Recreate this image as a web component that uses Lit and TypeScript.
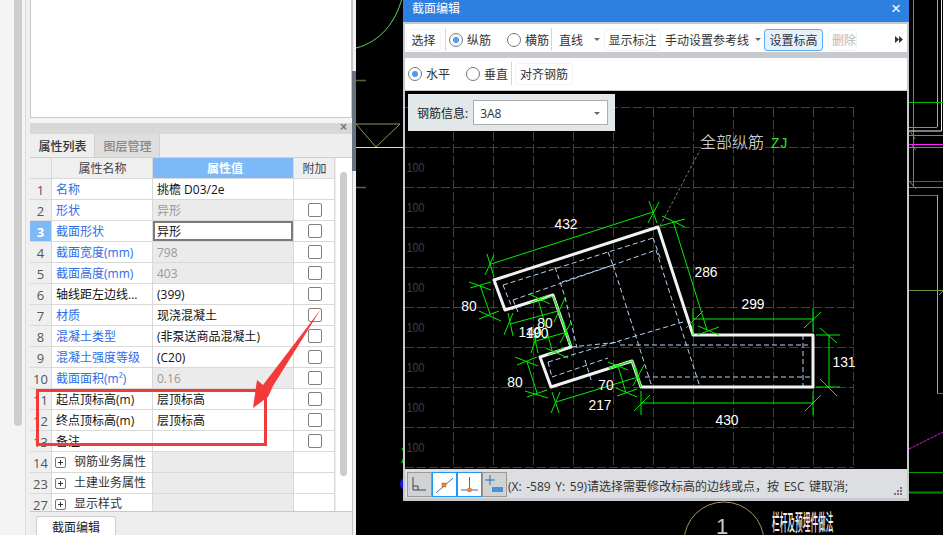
import { LitElement, html, svg, css } from "lit";
import { customElement } from "lit/decorators.js";

type Row = { n: string; name: string; link?: boolean; value?: string; ro?: boolean; check?: boolean; sel?: boolean; group?: boolean };

const rows: Row[] = [
  { n: "1", name: "名称", link: true, value: "挑檐 D03/2e" },
  { n: "2", name: "形状", link: true, value: "异形", ro: true, check: true },
  { n: "3", name: "截面形状", link: true, value: "异形", check: true, sel: true },
  { n: "4", name: "截面宽度(mm)", link: true, value: "798", ro: true, check: true },
  { n: "5", name: "截面高度(mm)", link: true, value: "403", ro: true, check: true },
  { n: "6", name: "轴线距左边线...", value: "(399)", check: true },
  { n: "7", name: "材质", link: true, value: "现浇混凝土", check: true },
  { n: "8", name: "混凝土类型", link: true, value: "(非泵送商品混凝土)", check: true },
  { n: "9", name: "混凝土强度等级", link: true, value: "(C20)", check: true },
  { n: "10", name: "截面面积(m²)", link: true, value: "0.16", ro: true, check: true },
  { n: "11", name: "起点顶标高(m)", value: "层顶标高", check: true },
  { n: "12", name: "终点顶标高(m)", value: "层顶标高", check: true },
  { n: "13", name: "备注", value: "", check: true },
  { n: "14", name: "钢筋业务属性", group: true, ro: true, value: "" },
  { n: "23", name: "土建业务属性", group: true, ro: true, value: "" },
  { n: "27", name: "显示样式", group: true, ro: true, value: "" },
];

const hx = [454, 494, 534, 574, 614, 654, 694, 734, 774, 814, 854];
const gridV = hx.map((x) => `M${x - 0.5} 108V468`).join("");
const gridH = [108, 148, 188, 228, 268, 308, 348, 388, 428, 468].map((y) => `M405 ${y - 0.5}H854`).join("");
const hundreds = [167, 207, 247, 287, 327, 367, 407, 447];

const green: number[][] = [
  [491, 264, 653, 212], [487, 254, 494, 277], [494, 255, 485, 275], [649, 201, 657, 223], [659, 202, 648, 223],
  [673, 221, 707, 330], [662, 216, 685, 227], [685, 219, 660, 226], [698, 326, 719, 335], [719, 327, 697, 335],
  [480, 285, 490, 314], [469, 282, 491, 290], [491, 282, 470, 288], [479, 311, 501, 321], [499, 311, 479, 319],
  [510, 324, 558, 311], [508, 313, 513, 336], [513, 313, 504, 335], [555, 300, 562, 322], [565, 298, 554, 322],
  [536, 341, 567, 332], [533, 330, 538, 353], [539, 329, 531, 353], [564, 322, 569, 343], [571, 322, 560, 343],
  [538, 299, 552, 350], [529, 294, 550, 304], [548, 295, 530, 303], [546, 348, 568, 358], [564, 348, 548, 355],
  [527, 362, 537, 393], [515, 357, 538, 366], [537, 357, 517, 365], [525, 391, 548, 398], [547, 390, 527, 397],
  [556, 402, 638, 377], [552, 392, 559, 413], [560, 392, 551, 413], [635, 365, 641, 387], [644, 365, 633, 386],
  [618, 366, 626, 393], [608, 362, 628, 370], [629, 362, 609, 369], [616, 388, 637, 397], [637, 389, 617, 396],
  [641, 403, 813, 403], [641, 391, 641, 415], [650, 395, 634, 411], [813, 391, 813, 415], [821, 395, 805, 411],
  [693, 319, 813, 319], [693, 308, 693, 335], [703, 311, 686, 328], [813, 308, 813, 332], [821, 312, 804, 328],
  [829, 335, 829, 387], [816, 335, 840, 335], [820, 328, 837, 343], [816, 387, 840, 387], [820, 379, 837, 396],
];
const greenPath = green.map((l) => `M${l[0]} ${l[1]}L${l[2]} ${l[3]}`).join("");

const rebar: number[][] = [
  [503, 285, 653, 238], [513, 300, 656, 250], [503, 285, 513, 310], [513, 300, 518, 312], [653, 238, 661, 260],
  [555, 267, 565, 297], [608, 252, 613, 265], [562, 282, 613, 265], [613, 265, 652, 387], [656, 250, 700, 387],
  [548, 362, 683, 322], [552, 377, 608, 358], [571, 347, 620, 342], [620, 345, 808, 345], [645, 377, 812, 377],
  [803, 335, 803, 387], [548, 362, 552, 377], [585, 360, 592, 383], [565, 297, 577, 348],
];
const rebarPath = rebar.map((l) => `M${l[0]} ${l[1]}L${l[2]} ${l[3]}`).join("");

const dims: [string, number, number][] = [
  ["432", 566, 229], ["286", 706, 277], ["299", 753, 309], ["131", 844, 367], ["430", 727, 425],
  ["217", 600, 410], ["70", 606, 390], ["80", 469, 311], ["80", 515, 387], ["80", 545, 328],
  ["140", 530, 337], ["190", 537, 338],
];

@customElement("app-root")
export class AppRoot extends LitElement {
  static styles = css`
    :host { display: block; width: 943px; height: 535px; position: relative; overflow: hidden; background: #000;
      font-family: "Open Sans", "Noto Sans CJK SC", sans-serif; font-size: 12px; color: #222; }
    .desk { position: absolute; left: 0; top: 0; width: 943px; height: 535px; }
    .marks { position: absolute; left: 0; top: 0; width: 943px; height: 535px; pointer-events: none; }
    .side { width: 356px; height: 535px; display: flex; background: #f4f4f4; padding-left: 14px; box-sizing: border-box; position: relative; }
    .rail { width: 8px; height: 426px; background: #cdcdcd; border-radius: 0 0 4px 4px; flex: none; }
    .gutter { width: 5px; margin-left: 3px; border-left: 1px solid #dcdcdc; background: #f0f0f0; box-sizing: border-box; flex: none; }
    .main { width: 322px; flex: none; display: flex; flex-direction: column; height: 535px; }
    .edge { flex: 1; background: #f2f2f2; border-left: 1px solid #c4c4c4; }
    .grip { position: absolute; right: 0; top: 71px; width: 4px; height: 100px; background: #6a7380; }
    .topbox { height: 118px; background: #fff; border: 1px solid #c8c8c8; border-top: 0; box-sizing: border-box; flex: none; }
    .phead { margin-top: 5px; height: 11px; background: #d8d8d8; position: relative; flex: none; }
    .phead span { position: absolute; right: 5px; top: -3px; font: 700 12px/15px "Liberation Sans", sans-serif; color: #777; }
    .tabs { height: 24px; display: flex; background: #eeeeee; border-bottom: 1px solid #d0d0d0; box-sizing: border-box; flex: none; }
    .tab { width: 65px; padding-left: 1px; text-align: center; line-height: 25px; font-weight: 500; color: #333; border-right: 1px solid #d0d0d0; box-sizing: border-box; }
    .tab.off { background: #dedede; color: #888; }
    .pbody { display: flex; flex: none; height: 354px; overflow: hidden; background: #fff; border-bottom: 1px solid #c8c8c8; box-sizing: border-box; }
    .table { width: 305px; flex: none; }
    .tr { display: grid; grid-template-columns: 22px 101px 141px 41px; height: 21px; }
    .tr > div { border-right: 1px solid #d9d9d9; border-bottom: 1px solid #d9d9d9; box-sizing: border-box; line-height: 22px; white-space: nowrap; overflow: hidden; }
    .idx { background: #efefef; text-align: center; font-size: 13px; color: #555; }
    .idx.sel { background: #7db8f8; color: #fff; font-weight: 700; }
    .hd { background: #efefef; text-align: center; color: #444; padding-left: 1px; }
    .hd.val { background: #7db8f8; color: #fff; font-weight: 700; }
    .nm { padding-left: 4px; color: #111; }
    .nm.link { color: #2f6ce5; }
    .nm.grp { padding-left: 3px; display: flex; align-items: center; gap: 8px; color: #333; }
    .plus { width: 11px; height: 11px; border: 1px solid #777; border-radius: 2px; box-sizing: border-box; position: relative; flex: none; }
    .plus::before { content: ""; position: absolute; left: 2px; right: 2px; top: 4px; height: 1px; background: #333; }
    .plus::after { content: ""; position: absolute; top: 2px; bottom: 2px; left: 4px; width: 1px; background: #333; }
    .val { padding-left: 4px; color: #111; }
    .val.ro { background: #ebebeb; color: #999; }
    .val.sel { box-shadow: inset 0 0 0 2px #7b7b7b; }
    .chk { display: flex; align-items: center; justify-content: center; padding-left: 1px; }
    .box { width: 14px; height: 14px; border: 1px solid #808080; border-radius: 2px; box-sizing: border-box; background: #fff; }
    .sb { flex: 1; background: #fff; border-left: 1px solid #eee; }
    .thumb { width: 7px; height: 304px; margin: 14px 0 0 4px; background: #cccccc; border-radius: 4px; }
    .btabs { flex: 1; background: #eeeeee; padding: 4px 0 0 6px; }
    .btab { width: 80px; height: 22px; background: #fff; border: 1px solid #cfcfcf; border-bottom: 0; border-radius: 3px 3px 0 0; box-sizing: border-box; text-align: center; line-height: 20px; padding-top: 1px; }
    .dlg { position: absolute; left: 403px; top: 0; width: 506px; height: 501px; background: #c6c9cd; display: flex; flex-direction: column; align-items: stretch; }
    .title { height: 22px; background: #2e80e0; color: #fff; padding-left: 9px; line-height: 17px; display: flex; justify-content: space-between; flex: none; }
    .title b { font: 400 17px/17px "Liberation Sans", sans-serif; margin-right: 8px; }
    .tb { background: #fff; margin: 0 2px; display: flex; align-items: center; flex: none; box-sizing: border-box; }
    .tb1 { height: 28px; margin-top: 2px; padding-top: 3px; }
    .tb2 { height: 32px; margin-top: 6px; margin-bottom: 1px; padding-bottom: 1px; }
    .btn { height: 22px; line-height: 21px; border: 1px solid #f3f3f3; border-radius: 3px; box-sizing: border-box; text-align: center; flex: none; white-space: nowrap; color: #333; }
    .btn.on { border-color: #62a9ef; background: #e5f1fd; color: #333; }
    .btn.dis { color: #b8b8b8; }
    .plain { flex: none; white-space: nowrap; color: #333; }
    .sep { width: 1px; height: 23px; background: #d5d5d5; flex: none; }
    .radio { width: 14px; height: 14px; border: 1px solid #777; border-radius: 50%; box-sizing: border-box; flex: none; position: relative; background: #fff; }
    .radio.on::after { content: ""; position: absolute; left: 3px; top: 3px; width: 6px; height: 6px; border-radius: 50%; background: #4a9cf2; }
    .caret { width: 0; height: 0; border: 3px solid transparent; border-top: 3px solid #666; border-bottom: 0; flex: none; }
    .more { flex: none; }
    .more svg { display: block; }
    .canvas { height: 378px; background: #000; margin: 0 2px; position: relative; flex: none; }
    .canvas svg { display: block; }
    .info { position: absolute; left: 3px; top: 3px; width: 207px; height: 37px; background: #e2e8ea; display: flex; align-items: center; box-sizing: border-box; padding-left: 9px; gap: 5px; }
    .sel-box { width: 135px; height: 25px; background: #fff; border: 1px solid #adadad; box-sizing: border-box; display: flex; align-items: center; justify-content: space-between; padding: 2px 7px 0 6px; color: #333; }
    .status { height: 29px; display: flex; align-items: center; background: #dcdee1; margin: 0 2px; padding: 2px 0 0 2px; box-sizing: border-box; position: relative; flex: none; color: #333; }
    .ib { width: 25px; height: 25px; box-sizing: border-box; border: 1px solid #9a9a9a; background: #d0d2d4; flex: none; }
    .ib.on { border: 1px solid #2196f3; background: #fff; }
    .ib svg { display: block; }
    .stxt { margin-left: 1px; padding-top: 2px; white-space: nowrap; word-spacing: 1.5px; }
    .dots { position: absolute; right: 4px; bottom: 2px; }
    .gridv { stroke: #3a404e; stroke-width: 1; stroke-dasharray: 9 3; fill: none; }
    .hund { font: 12.500px "Liberation Sans", sans-serif; fill: #3a404c; }
    .dim { font: 15px "Liberation Sans", sans-serif; fill: #fff; text-anchor: middle; }
    .lbl { font: 300 16px "Noto Sans CJK SC", sans-serif; fill: #e8e8e8; }
    .zj { font: 14px "Liberation Mono", monospace; fill: #2fe02f; }
    .note { font: 500 16px "Noto Sans CJK SC", sans-serif; fill: #f0f0f0; }
    .one { font: 22px "Liberation Sans", sans-serif; fill: #c8c8c8; }
  `;

  private desk() {
    return svg`<svg class="desk" width="943" height="535" viewBox="0 0 943 535">
      <path d="M402 -2C396 22 380 42 356 48" fill="none" stroke="#66d466"/>
      <path d="M356 80.500H366M356 187.500H366" stroke="#4f6a34" stroke-width="1.5"/>
      <path d="M356 124H400L376 147Z" fill="none" stroke="#8f9a52"/>
      <path d="M356 147.500H403" stroke="#d6ec8c"/>
      <path d="M403 452l-1.500 -4h1.500zM403 463h-2l2 -5z" fill="#0a0"/>
      <ellipse cx="403" cy="484" rx="3" ry="5" fill="#1616d8"/>
      <path d="M913.500 0V186" stroke="#71903c"/>
      <path d="M937.500 0V127M937.500 195V393" stroke="#f070f0"/>
      <path d="M941.500 0V131H909" stroke="#f5f5f5" fill="none"/>
      <path d="M909 127.500H937" stroke="#b070b0"/>
      <path d="M909 102.500H943" stroke="#00c000"/>
      <path d="M909 135.500H943M909 147.500H943M909 187.500H943" stroke="#808080"/>
      <path d="M909 144.500H943" stroke="#ff20ff"/>
      <path d="M909 181.500H943" stroke="#c010c0"/>
      <path d="M909 195.500H937M937 393.500H943" stroke="#905090"/>
      <path d="M909 290.500H943" stroke="#71903c"/>
      <path d="M910 131l5 8M911 144l5 6M910 182l6 7M939 295l4 -4" stroke="#71903c"/>
      <path d="M909 449L943 432" stroke="#e020e0" stroke-dasharray="3 1"/>
      <path d="M909 472.500H943" stroke="#00a000"/>
      <path d="M909 492.500H943" stroke="#008800" stroke-width="2"/>
      <circle cx="724" cy="542" r="40" fill="none" stroke="#a89460"/>
      <text class="one" x="716" y="534">1</text>
      <g transform="translate(772 530) scale(0.48 1.32)"><text class="note" x="0" y="0" textLength="128">栏杆及预埋件做法</text></g>
    </svg>`;
  }

  private drawing() {
    return svg`<svg width="502" height="378" viewBox="405 91 502 378">
      <path class="gridv" d=${gridV + gridH}/>
      ${hundreds.map((y) => svg`<text class="hund" x="406.500" y=${y + 5} textLength="18" lengthAdjust="spacingAndGlyphs">100</text>`)}
      <path d="M660 226L700 150" stroke="#777" stroke-dasharray="3 2" fill="none"/>
      <text class="lbl" x="700" y="148">全部纵筋</text>
      <text class="zj" x="771" y="148">ZJ</text>
      <path d=${rebarPath} stroke="#b4d4f8" stroke-dasharray="5 3" fill="none"/>
      <path d="M494 280L658 227L693 335H813V387H641L632 361L551 387L540 357L571 347L553 295L505 310Z" fill="none" stroke="#f2f2f2" stroke-width="3" stroke-linejoin="round"/>
      <path d=${greenPath} stroke="#00f000" fill="none"/>
      <path d="M553 296L571 346M540 301L552 296M608 368L632 361L641 387" stroke="#26e026" stroke-width="1.2" fill="none"/>
      ${dims.map((d) => svg`<text class="dim" x=${d[1]} y=${d[2]} textLength=${d[0].length * 7.7} lengthAdjust="spacingAndGlyphs">${d[0]}</text>`)}
    </svg>`;
  }

  private marks() {
    return svg`<svg class="marks" width="943" height="535" viewBox="0 0 943 535">
      <rect x="37.500" y="390.500" width="228" height="54" fill="none" stroke="#f23a3a" stroke-width="3"/>
      <polygon points="321,309 273,386 268,397 253,408 257,380 263,385" fill="#f23a3a"/>
    </svg>`;
  }

  render() {
    return html`
      ${this.desk()}
      <div class="side">
        <div class="rail"></div>
        <div class="gutter"></div>
        <div class="main">
          <div class="topbox"></div>
          <div class="phead"><span>×</span></div>
          <div class="tabs"><div class="tab">属性列表</div><div class="tab off">图层管理</div></div>
          <div class="pbody">
            <div class="table">
              <div class="tr"><div class="hd"></div><div class="hd">属性名称</div><div class="hd val">属性值</div><div class="hd">附加</div></div>
              ${rows.map((r) => html`
                <div class="tr">
                  <div class="idx ${r.sel ? "sel" : ""}">${r.n}</div>
                  ${r.group
                    ? html`<div class="nm grp"><span class="plus"></span><span>${r.name}</span></div>`
                    : html`<div class="nm ${r.link ? "link" : ""}">${r.name}</div>`}
                  <div class="val ${r.ro ? "ro" : ""} ${r.sel ? "sel" : ""}">${r.value}</div>
                  <div class="chk">${r.check ? html`<span class="box"></span>` : ""}</div>
                </div>`)}
            </div>
            <div class="sb"><div class="thumb"></div></div>
          </div>
          <div class="btabs"><div class="btab">截面编辑</div></div>
        </div>
        <div class="edge"></div>
        <div class="grip"></div>
      </div>
      ${this.marks()}
      <div class="dlg">
        <div class="title"><span>截面编辑</span><b>×</b></div>
        <div class="tb tb1">
          <div class="btn" style="width:35px;margin-left:1px">选择</div>
          <div class="sep" style="margin:0 3px 0 4px"></div>
          <span class="radio on"></span><span class="plain" style="margin-left:4px">纵筋</span>
          <span class="radio" style="margin-left:16px"></span><span class="plain" style="margin-left:4px">横筋</span>
          <div class="sep" style="margin:0 4px 0 2px"></div>
          <div class="plain" style="width:38px;padding-left:3px;box-sizing:border-box">直线</div>
          <span class="caret"></span>
          <div class="btn" style="width:57px;margin-left:4px">显示标注</div>
          <span class="plain" style="margin-left:4px">手动设置参考线</span>
          <span class="caret" style="margin-left:6px"></span>
          <div class="btn on" style="width:59px;margin-left:3px">设置标高</div>
          <div class="btn dis" style="width:29px;margin-left:5px;text-align:left;padding-left:3px">删除</div>
          <span class="more" style="margin-left:38px"><svg width="8" height="7" viewBox="0 0 8 7"><path d="M0 0L4 3.500L0 7ZM4 0L8 3.500L4 7Z" fill="#333"/></svg></span>
        </div>
        <div class="tb tb2">
          <span class="radio on" style="margin-left:3px"></span><span class="plain" style="margin-left:4px">水平</span>
          <span class="radio" style="margin-left:16px"></span><span class="plain" style="margin-left:4px">垂直</span>
          <div class="sep" style="margin:0 3px"></div>
          <div class="btn" style="width:58px">对齐钢筋</div>
        </div>
        <div class="canvas">
          ${this.drawing()}
          <div class="info"><span>钢筋信息:</span><div class="sel-box"><span>3A8</span><span class="caret"></span></div></div>
        </div>
        <div class="status">
          <div class="ib"><svg width="23" height="23" viewBox="0 0 23 23"><path d="M5 4V17H18M5 13H10V17" fill="none" stroke="#444"/></svg></div>
          <div class="ib on"><svg width="23" height="23" viewBox="0 0 23 23"><path d="M3 20L20 5" stroke="#3c6ea8" fill="none"/><rect x="9" y="10" width="4" height="4" fill="#f08030" stroke="#c06020" stroke-width=".5"/></svg></div>
          <div class="ib on"><svg width="23" height="23" viewBox="0 0 23 23"><path d="M11.500 4V17M3 17H20" stroke="#3c6ea8" fill="none"/><rect x="9.500" y="15" width="4" height="4" fill="#f08030"/></svg></div>
          <div class="ib"><svg width="23" height="23" viewBox="0 0 23 23"><path d="M7 2V12M2 7H12" stroke="#2f6fb0" fill="none"/><rect x="9" y="14" width="11" height="5" fill="#4a90dc"/></svg></div>
          <span class="stxt">(X: -589 Y: 59)请选择需要修改标高的边线或点，按 ESC 键取消;</span>
          <svg class="dots" width="9" height="9" viewBox="0 0 9 9"><path d="M6 0h2v2H6zM3 3h2v2H3zM6 3h2v2H6zM0 6h2v2H0zM3 6h2v2H3zM6 6h2v2H6z" fill="#777"/></svg>
        </div>
      </div>
    `;
  }
}
